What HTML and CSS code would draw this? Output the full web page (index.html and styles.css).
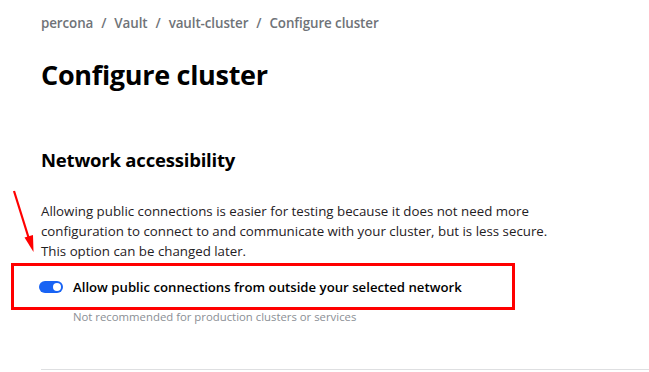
FILE: index.html
```html
<!DOCTYPE html>
<html>
<head>
<meta charset="utf-8">
<link rel="stylesheet" href="styles.css">
</head>
<body>
<div class="page">
  <nav class="crumbs">
    <span>percona</span><span class="sep">/</span><span>Vault</span><span class="sep">/</span><span>vault-cluster</span><span class="sep">/</span><span>Configure cluster</span>
  </nav>
  <h1 class="title">Configure cluster</h1>
  <h2 class="section">Network accessibility</h2>
  <p class="desc">Allowing public connections is easier for testing because it does not need more configuration to connect to and communicate with your cluster, but is less secure. This option can be changed later.</p>
  <div class="highlight">
    <label class="option">
      <span class="toggle"><span class="knob"></span></span>
      <span class="label">Allow public connections from outside your selected network</span>
    </label>
    <svg class="arrow" width="40" height="80" viewBox="0 0 40 80">
      <line x1="14" y1="10" x2="29" y2="58" stroke="#ff0000" stroke-width="2.2"/>
      <polygon points="24.5,56.5 33,54 33.5,71" fill="#ff0000"/>
    </svg>
  </div>
  <div class="hint">Not recommended for production clusters or services</div>
  <hr class="rule">
</div>
</body>
</html>
```
FILE: styles.css
```css
html, body {
  margin: 0;
  padding: 0;
  background: #ffffff;
}
body {
  font-family: "Open Sans", "Noto Sans", sans-serif;
  color: #1f2124;
  width: 649px;
  height: 372px;
  overflow: hidden;
}
.page {
  padding: 13px 0 0 41px;
  display: flex;
  flex-direction: column;
}
.crumbs {
  font-size: 13.4px;
  color: #6f7378;
  font-weight: 600;
  line-height: 20px;
  letter-spacing: -0.1px;
}
.sep {
  margin: 0 8px;
}
.title {
  margin: 22px 0 0 0;
  font-size: 27px;
  font-weight: 700;
  line-height: 40px;
  color: #000;
  letter-spacing: -0.3px;
}
.section {
  margin: 51px 0 0 0;
  font-size: 18.5px;
  font-weight: 700;
  line-height: 28px;
  color: #000;
  letter-spacing: -0.2px;
}
.desc {
  margin: 27px 0 0 0;
  width: 515px;
  font-size: 13.3px;
  line-height: 20px;
  color: #1f2124;
}
.highlight {
  position: relative;
  margin: 2px 0 0 -30px;
  box-sizing: border-box;
  width: 504px;
  height: 47px;
  border: 3px solid #ff0000;
  display: flex;
  align-items: center;
  padding-left: 25px;
}
.option {
  display: flex;
  align-items: center;
  gap: 10px;
}
.toggle {
  width: 24px;
  height: 12px;
  border-radius: 6px;
  background: #1863f4;
  display: flex;
  align-items: center;
  justify-content: flex-end;
  padding-right: 2px;
  box-sizing: border-box;
}
.knob {
  width: 8px;
  height: 8px;
  border-radius: 50%;
  background: #fff;
}
.label {
  font-size: 13.2px;
  font-weight: 600;
  color: #000;
}
.arrow {
  position: absolute;
  left: -14px;
  top: -85px;
}
.hint {
  margin: 0 0 0 32px;
  font-size: 11.35px;
  color: #8b8f95;
  line-height: 14px;
}
.rule {
  margin: 45px 0 0 0;
  border: none;
  border-top: 1px solid #dedfe1;
}
```
